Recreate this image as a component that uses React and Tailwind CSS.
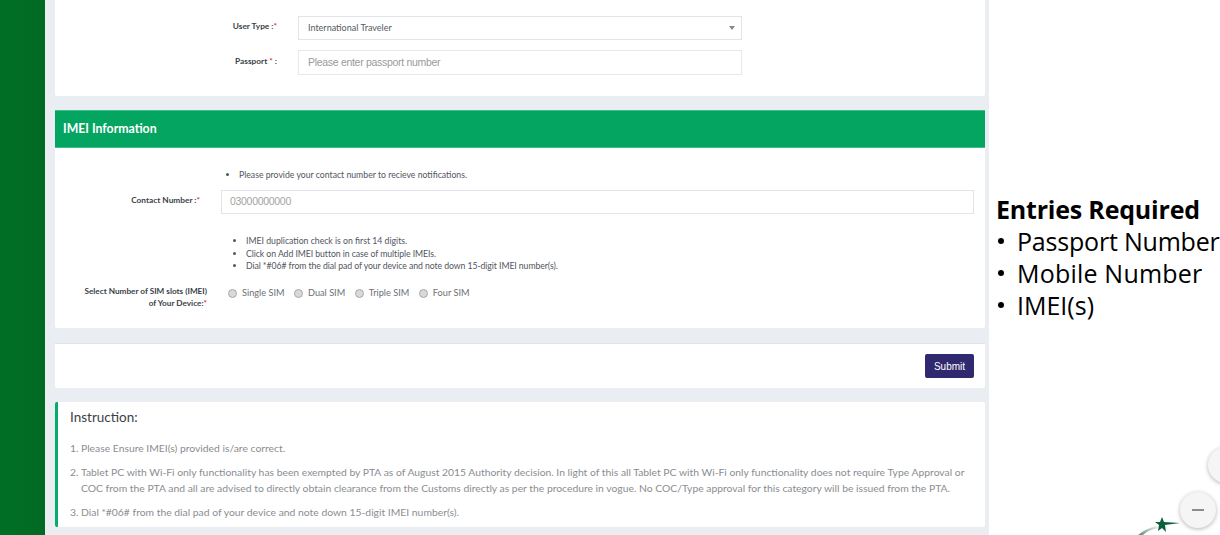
import React from 'react';

const FONT = "font-['Lato','Noto_Sans',sans-serif]";

const Req = () => <span className="text-[#e3342f]">*</span>;

const SimOption = ({ label }) => (
  <label className="flex items-center gap-[5px]">
    <span className="w-[9px] h-[9px] rounded-full bg-[#d9d9d9] border border-[#a9a9a9]" />
    <span>{label}</span>
  </label>
);

const Entry = ({ children, className = '' }) => (
  <li className="flex items-center h-[32px]">
    <span className="ml-[2px] w-[6px] h-[6px] shrink-0 rounded-full bg-black" />
    <span className={`ml-[13px] ${className}`}>{children}</span>
  </li>
);

export default function App() {
  return (
    <div className={`flex w-[1220px] h-[535px] overflow-hidden bg-white ${FONT}`}>
      {/* barra lateral */}
      <div className="w-[45px] shrink-0 bg-gradient-to-r from-[#006f26] to-[#016a22]" />

      {/* conteudo */}
      <div className="w-[944px] shrink-0 bg-[#eaedf2] pl-[10px] pr-[4px] flex flex-col">
        <div className="h-[96px] shrink-0 bg-white rounded-b-[2px] pt-[16px]">
          <div className="flex items-center h-[24px]">
            <div className="w-[222px] text-right text-[8.3px] font-bold text-[#3a3f47] -mt-[3px]">User Type :<Req /></div>
            <div className="ml-[21px] w-[444px] h-[24px] border border-[#e1e4ea] flex items-center justify-between pl-[9px] pr-[6px] text-[9px] text-[#555b63]">
              <span>International Traveler</span>
              <span className="w-0 h-0 border-x-[3px] border-x-transparent border-t-[4px] border-t-[#85888c]" />
            </div>
          </div>
          <div className="flex items-center h-[25px] mt-[10px]">
            <div className="w-[222px] text-right text-[8.3px] font-bold text-[#3a3f47] -mt-[3px]">Passport <Req /> :</div>
            <div className="ml-[21px] w-[444px] h-[25px] border border-[#e6e8ec] flex items-center pl-[9px] text-[10.5px] tracking-[-0.3px] font-['Liberation_Sans',sans-serif] text-[#9a9a9a]">
              Please enter passport number
            </div>
          </div>
        </div>

        <div className="mt-[14px] h-[38px] shrink-0 bg-[#03a561] border-y border-[#3cbf8a] flex items-center pl-[8px] pt-[1px] text-white text-[12.3px] font-bold">
          IMEI Information
        </div>

        <div className="h-[180px] shrink-0 bg-white rounded-b-[2px] pt-[21px]">
          <ul className="list-disc ml-[184px] text-[8.7px] leading-[12px] text-[#51565e]">
            <li>Please provide your contact number to recieve notifications.</li>
          </ul>
          <div className="flex items-center h-[24px] mt-[9px]">
            <div className="w-[145px] text-right text-[8.3px] font-bold text-[#3a3f47] -mt-[3px]">Contact Number :<Req /></div>
            <div className="ml-[21px] w-[753px] h-[24px] border border-[#e1e4ea] flex items-center pl-[8px] text-[10.5px] tracking-[-0.3px] font-['Liberation_Sans',sans-serif] text-[#a3a3a3]">
              03000000000
            </div>
          </div>
          <ul className="list-disc ml-[191px] mt-[21px] text-[8.7px] leading-[12.7px] text-[#51565e]">
            <li>IMEI duplication check is on first 14 digits.</li>
            <li className="tracking-[-0.06px]">Click on Add IMEI button in case of multiple IMEIs.</li>
            <li className="tracking-[-0.07px]">Dial *#06# from the dial pad of your device and note down 15-digit IMEI number(s).</li>
          </ul>
          <div className="flex items-start mt-[12px]">
            <div className="w-[152px] text-right text-[8.2px] leading-[12px] font-bold text-[#3a3f47]">
              Select Number of SIM slots (IMEI)<br />of Your Device:<Req />
            </div>
            <div className="ml-[21px] mt-[1px] flex items-center gap-[9.5px] text-[9.2px] text-[#6b7077]">
              <SimOption label="Single SIM" />
              <SimOption label="Dual SIM" />
              <SimOption label="Triple SIM" />
              <SimOption label="Four SIM" />
            </div>
          </div>
        </div>

        <div className="mt-[15px] h-[45px] shrink-0 bg-white border-t border-[#dfe3e9] rounded-b-[2px] flex items-center justify-end pr-[11px]">
          <button className="w-[49px] h-[24px] rounded-[2px] bg-[#31296f] text-white text-[10px] font-['Liberation_Sans',sans-serif]">Submit</button>
        </div>

        <div className="mt-[14px] h-[125px] shrink-0 bg-white border-l-[3px] border-[#03ad68] rounded-[2px] pl-[12px] pr-[10px] pt-[6px]">
          <h4 className="text-[13.5px] leading-[18px] text-[#3b3f45]">Instruction:</h4>
          <ol className="mt-[14px] list-decimal pl-[11px] text-[10.35px] leading-[16px] text-[#8a8d91]">
            <li>Please Ensure IMEI(s) provided is/are correct.</li>
            <li className="mt-[8px]">Tablet PC with Wi-Fi only functionality has been exempted by PTA as of August 2015 Authority decision. In light of this all Tablet PC with Wi-Fi only functionality does not require Type Approval or COC from the PTA and all are advised to directly obtain clearance from the Customs directly as per the procedure in vogue. No COC/Type approval for this category will be issued from the PTA.</li>
            <li className="mt-[8px]">Dial *#06# from the dial pad of your device and note down 15-digit IMEI number(s).</li>
          </ol>
        </div>
      </div>

      {/* painel direito */}
      <div className="relative flex-1 min-w-0 pl-[7px] pt-[193px] font-['Open_Sans','Noto_Sans',sans-serif] text-black whitespace-nowrap">
        <div className="text-[25px] leading-[32px] font-bold tracking-[-0.2px]">Entries Required</div>
        <ul className="text-[25px] leading-[32px]">
          <Entry className="-ml-0 tracking-[-0.2px]">Passport Number</Entry>
          <Entry className="tracking-[0.2px]">Mobile Number</Entry>
          <Entry>IMEI(s)</Entry>
        </ul>

        <div className="absolute left-[219px] top-[447px] w-[36px] h-[36px] rounded-full bg-[#f5f5f5] shadow-[0_1px_4px_rgba(0,0,0,0.3)]" />
        <svg className="absolute left-[145px] top-[515px]" width="50" height="20" viewBox="0 0 50 20">
          <defs>
            <linearGradient id="swoosh" x1="0" x2="1" y1="1" y2="0">
              <stop offset="0" stopColor="#5d8c78" />
              <stop offset="1" stopColor="#5d8c78" stopOpacity="0.1" />
            </linearGradient>
          </defs>
          <path d="M4 20 Q11 14 22 11 L24 13 Q14 15 9 20 Z" fill="url(#swoosh)" />
          <path d="M28 2 L30 7 L46 8 L31 10 L32 17 L28 13 L24 16 L25 10 L21 7 L26 7 Z" fill="#0b5f3c" />
        </svg>
        <div className="absolute left-[191px] top-[492px] w-[36px] h-[36px] rounded-full bg-[#f5f5f5] shadow-[0_1px_4px_rgba(0,0,0,0.3)] flex items-center justify-center">
          <span className="w-[12px] h-[2px] bg-[#8c8c8c]" />
        </div>
      </div>
    </div>
  );
}
